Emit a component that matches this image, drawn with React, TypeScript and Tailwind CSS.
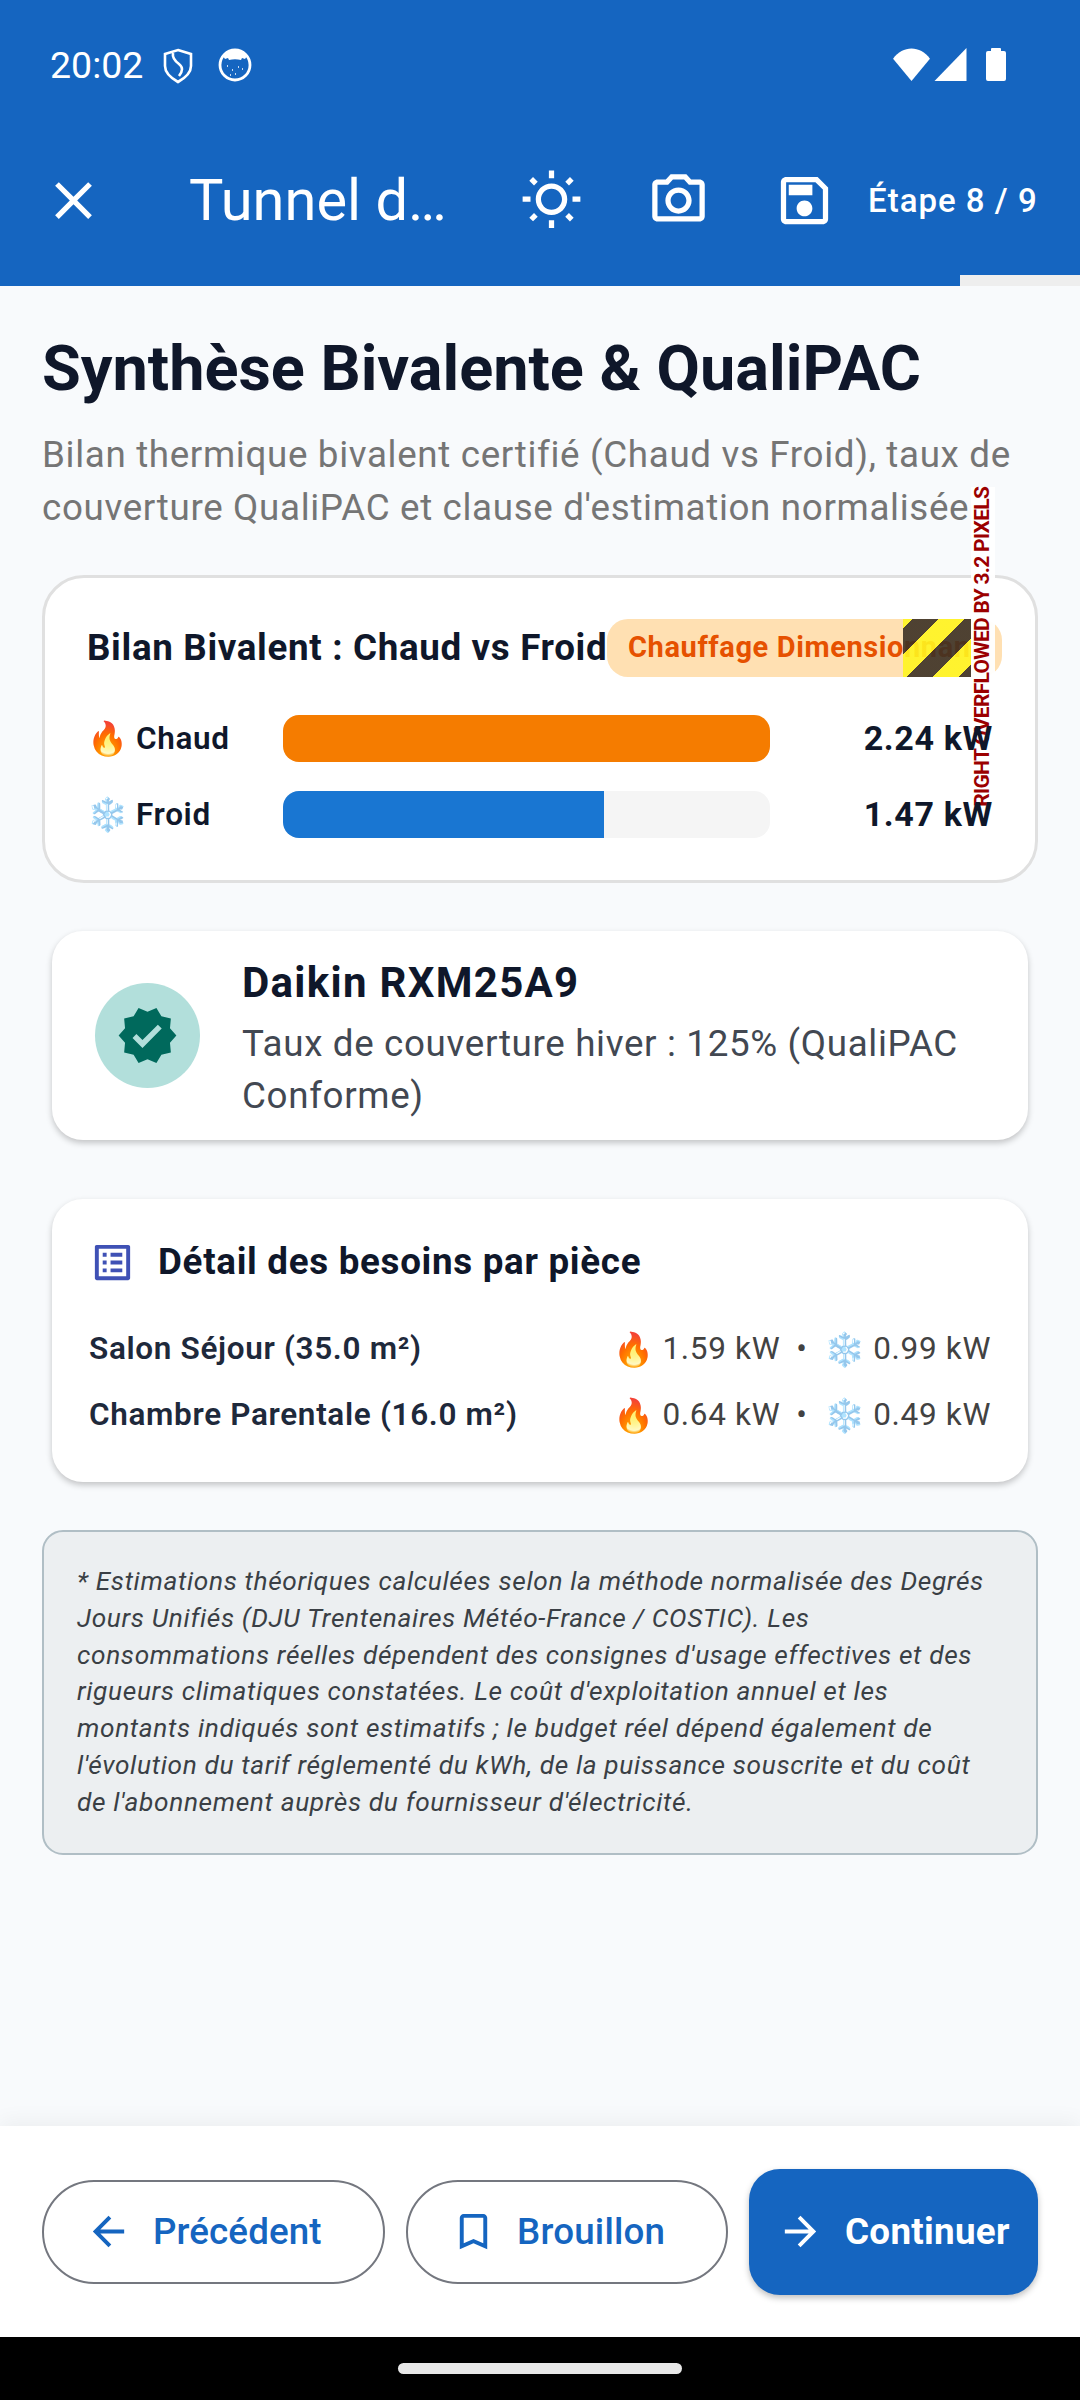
import React from 'react';

const Icon = ({ d, className }: { d: string; className: string }) => (
  <svg viewBox="0 0 24 24" fill="currentColor" className={className}>
    <path d={d} />
  </svg>
);

const icons = {
  close: 'M19 6.41L17.59 5 12 10.59 6.41 5 5 6.41 10.59 12 5 17.59 6.41 19 12 13.41 17.59 19 19 17.59 13.41 12z',
  sun: 'M6.76 4.84l-1.8-1.79-1.41 1.41 1.79 1.79zM1 10.5h3v2H1zM11 .55h2V3.5h-2zm8.04 2.495l1.408 1.407-1.79 1.79-1.407-1.408zm-1.8 15.115l1.79 1.8 1.41-1.41-1.8-1.79zM20 10.5h3v2h-3zm-8-5c-3.31 0-6 2.69-6 6s2.69 6 6 6 6-2.69 6-6-2.69-6-6-6zm0 10c-2.21 0-4-1.79-4-4s1.79-4 4-4 4 1.79 4 4-1.79 4-4 4zm-1 4h2v2.95h-2zm-7.45-.96l1.41 1.41 1.79-1.8-1.41-1.41z',
  camera: 'M14.12 4l1.83 2H20v12H4V6h4.05l1.83-2h4.24M15 2H9L7.17 4H4c-1.1 0-2 .9-2 2v12c0 1.1.9 2 2 2h16c1.1 0 2-.9 2-2V6c0-1.1-.9-2-2-2h-3.17L15 2zm-3 7c1.65 0 3 1.35 3 3s-1.35 3-3 3-3-1.35-3-3 1.35-3 3-3m0-2c-2.76 0-5 2.24-5 5s2.24 5 5 5 5-2.24 5-5-2.24-5-5-5z',
  save: 'M17 3H5c-1.11 0-2 .9-2 2v14c0 1.1.89 2 2 2h14c1.1 0 2-.9 2-2V7l-4-4zm2 16H5V5h11.17L19 7.83V19zm-7-7c-1.66 0-3 1.34-3 3s1.34 3 3 3 3-1.34 3-3-1.34-3-3-3zM6 6h9v4H6z',
  verified: 'M23 12l-2.44-2.79.34-3.69-3.61-.82-1.89-3.2L12 2.96 8.6 1.5 6.71 4.69 3.1 5.5l.34 3.7L1 12l2.44 2.79-.34 3.7 3.61.82L8.6 22.5l3.4-1.47 3.4 1.46 1.89-3.19 3.61-.82-.34-3.69L23 12zm-12.91 4.72l-3.8-3.81 1.48-1.48 2.32 2.33 5.85-5.87 1.48 1.48-7.33 7.35z',
  list: 'M19 5v14H5V5h14m1.1-2H3.9c-.5 0-.9.4-.9.9v16.2c0 .4.4.9.9.9h16.2c.4 0 .9-.5.9-.9V3.9c0-.5-.5-.9-.9-.9zM11 7h6v2h-6V7zm0 4h6v2h-6v-2zm0 4h6v2h-6v-2zM7 7h2v2H7V7zm0 4h2v2H7v-2zm0 4h2v2H7v-2z',
  back: 'M20 11H7.83l5.59-5.59L12 4l-8 8 8 8 1.41-1.41L7.83 13H20v-2z',
  forward: 'M12 4l-1.41 1.41L16.17 11H4v2h12.17l-5.58 5.59L12 20l8-8z',
  bookmark: 'M17 3H7c-1.1 0-2 .9-2 2v16l7-3 7 3V5c0-1.1-.9-2-2-2zm0 15l-5-2.18L7 18V5h10v13z',
};

const Rooms = [
  { name: 'Salon Séjour (35.0 m²)', hot: '1.59 kW', cold: '0.99 kW' },
  { name: 'Chambre Parentale (16.0 m²)', hot: '0.64 kW', cold: '0.49 kW' },
];

const Meter = ({ emoji, label, value, bar, width }: { emoji: string; label: string; value: string; bar: string; width: string }) => (
  <div className="flex items-center h-[47px]">
    <span className="w-[49px] text-[33px] leading-none">{emoji}</span>
    <span className="w-[147px] text-[31.5px] font-semibold text-[#0f172a] tracking-[0.66px]">{label}</span>
    <div className="w-[487px] h-[47px] rounded-[16px] bg-[#f5f5f5] overflow-hidden">
      <div className={`h-full ${bar} ${width}`} />
    </div>
    <span className="ml-auto text-[34px] font-bold text-[#0f172a] tracking-[0.66px]">{value}</span>
  </div>
);

const App = () => {
  return (
    <div className="w-[1080px] h-[2400px] flex flex-col bg-[#f8fafc] font-['Roboto',sans-serif] overflow-hidden">
      <header className="relative h-[286px] shrink-0 bg-[#1565c0] text-white">
        <div className="h-[130px] flex items-start pt-[43px] pl-[50px] pr-[74px]">
          <span className="text-[37.5px] leading-[44px]">20:02</span>
          <svg viewBox="0 0 30 36" fill="none" stroke="currentColor" strokeWidth="2.6" className="w-[30px] h-[36px] ml-[20px] mt-[5px]">
            <path d="M15 2l13 4v12c0 7-6 12-13 16C8 30 2 25 2 18V6z" />
            <path d="M10 5c-1 5 2 8 6 11s4 7 0 12" />
          </svg>
          <svg viewBox="0 0 34 34" className="w-[34px] h-[34px] ml-[25px] mt-[5px]">
            <circle cx="17" cy="17" r="15" fill="none" stroke="currentColor" strokeWidth="2.8" />
            <path d="M5 8C9 1 25 1 29 8l-2 3-3-1-1 2c-4-1-8-1-12 0l-1-2-3 1z" fill="currentColor" />
            <path d="M9 18h1M14 22h1M20 19h1M24 21h1M17 26h1M12 27h1" stroke="currentColor" strokeWidth="1.6" />
          </svg>
          <div className="ml-auto flex items-center gap-[3px] pt-[4px]">
            <svg viewBox="0 0 38 34" className="w-[39px] h-[33px] fill-white">
              <path d="M0 11C10 -3 28 -3 38 11L19 34z" />
            </svg>
            <svg viewBox="0 0 32 33" className="w-[33px] h-[33px] fill-white">
              <path d="M32 0v33H0z" />
            </svg>
            <svg viewBox="0 0 20 34" className="w-[20px] h-[34px] ml-[16px] fill-white">
              <path d="M5 2a1 1 0 011-1h8a1 1 0 011 1v2h3a2 2 0 012 2v26a2 2 0 01-2 2H2a2 2 0 01-2-2V6a2 2 0 012-2h3z" />
            </svg>
          </div>
        </div>
        <div className="h-[141px] flex items-center">
          <Icon d={icons.close} className="w-[63px] h-[63px] ml-[42px] shrink-0" />
          <span className="ml-[84px] w-[333px] text-[57.75px] leading-none whitespace-nowrap">Tunnel d…</span>
          <Icon d={icons.sun} className="w-[63px] h-[63px] ml-[-2px]" />
          <Icon d={icons.camera} className="w-[63px] h-[63px] ml-[64px]" />
          <Icon d={icons.save} className="w-[63px] h-[63px] ml-[63px]" />
          <span className="ml-[32px] text-[33px] font-medium whitespace-nowrap tracking-[1px]">Étape 8 / 9</span>
        </div>
        <div className="absolute right-0 bottom-0 w-[120px] h-[11px] bg-[#eeeeee]" />
      </header>

      <main className="flex-1 flex flex-col px-[42px] pt-[42px]">
        <h1 className="text-[63px] leading-[82px] font-bold text-[#0f172a] whitespace-nowrap">Synthèse Bivalente & QualiPAC</h1>
        <p className="mt-[19px] text-[36.75px] leading-[52.5px] text-[#757575] tracking-[0.66px]">
          Bilan thermique bivalent certifié (Chaud vs Froid), taux de couverture QualiPAC et clause d'estimation normalisée
        </p>

        <section className="relative mt-[41px] h-[308px] rounded-[42px] border-[3px] border-[#e0e0e0] bg-white px-[42px] pt-[41px]">
          <div className="flex items-center h-[58px]">
            <h2 className="w-[520px] shrink-0 text-[36.75px] font-bold text-[#0f172a] whitespace-nowrap tracking-[0.66px]">Bilan Bivalent : Chaud vs Froid</h2>
            <div className="w-[395px] h-[58px] shrink-0 rounded-[21px] bg-[#ffe0b2] px-[21px] flex items-center overflow-hidden">
              <span className="text-[29px] font-bold text-[#e65100] whitespace-nowrap tracking-[0.6px]">Chauffage Dimensionnant</span>
            </div>
          </div>
          <div className="absolute left-[858px] top-[41px] w-[68px] h-[58px] bg-[repeating-linear-gradient(135deg,#fff520_0px,#fff520_7px,#3b3024_7px,#3b3024_25.4px,#fff520_25.4px,#fff520_36.8px)] opacity-90" />
          <div className="absolute left-[926px] top-[-91px] w-[24px] h-[320px] flex items-center justify-center bg-white/95">
            <span className="block rotate-[-90deg] whitespace-nowrap text-[21px] font-bold text-[#9b0000] tracking-[-0.7px]">RIGHT OVERFLOWED BY 3.2 PIXELS</span>
          </div>
          <div className="relative mt-[38px] flex flex-col gap-[29px]">
            <Meter emoji="🔥" label="Chaud" value="2.24 kW" bar="bg-[#f57c00]" width="w-full" />
            <Meter emoji="❄️" label="Froid" value="1.47 kW" bar="bg-[#1976d2]" width="w-[66%]" />
          </div>
        </section>

        <section className="mx-[10px] mt-[48px] h-[209px] rounded-[31px] bg-white shadow-[0_3px_6px_rgba(0,0,0,0.22)] flex items-center pl-[43px] pr-[30px]">
          <div className="w-[105px] h-[105px] rounded-full bg-[#b2dfdb] shrink-0 flex items-center justify-center">
            <Icon d={icons.verified} className="w-[63px] h-[63px] text-[#00695c]" />
          </div>
          <div className="ml-[42px] pt-[9px]">
            <h3 className="text-[42px] leading-[50px] font-bold text-[#0f172a] tracking-[1.3px]">Daikin RXM25A9</h3>
            <p className="mt-[10px] text-[36.75px] leading-[52.5px] text-[#424852] tracking-[0.66px]">
              Taux de couverture hiver : 125% (QualiPAC Conforme)
            </p>
          </div>
        </section>

        <section className="mx-[10px] mt-[59px] h-[283px] rounded-[31px] bg-white shadow-[0_3px_6px_rgba(0,0,0,0.22)] pl-[37px] pr-[37px] pt-[42px]">
          <div className="flex items-center h-[42px]">
            <Icon d={icons.list} className="w-[47px] h-[47px] shrink-0 text-[#3f51b5]" />
            <h3 className="ml-[22px] text-[36.75px] font-bold text-[#0f172a] tracking-[0.7px]">Détail des besoins par pièce</h3>
          </div>
          <div className="mt-[49px] flex flex-col gap-[32px]">
            {Rooms.map((room) => (
              <div key={room.name} className="flex items-center h-[34px]">
                <span className="text-[31.5px] font-semibold text-[#1e293b] tracking-[0.66px]">{room.name}</span>
                <div className="ml-auto flex items-center text-[31.5px] text-[#424242] tracking-[0.66px]">
                  <span className="text-[33px] leading-none">🔥</span>
                  <span className="ml-[8px]">{room.hot}</span>
                  <span className="mx-[16px]">•</span>
                  <span className="text-[33px] leading-none">❄️</span>
                  <span className="ml-[8px]">{room.cold}</span>
                </div>
              </div>
            ))}
          </div>
        </section>

        <section className="mt-[48px] h-[325px] rounded-[21px] border-[2.6px] border-[#b0bec5] bg-[#eceff1] px-[33px] pt-[31px]">
          <p className="text-[26.25px] leading-[36.75px] italic text-[#3a3f45] tracking-[0.65px]">
            * Estimations théoriques calculées selon la méthode normalisée des Degrés Jours Unifiés (DJU Trentenaires Météo-France / COSTIC). Les consommations réelles dépendent des consignes d'usage effectives et des rigueurs climatiques constatées. Le coût d'exploitation annuel et les montants indiqués sont estimatifs ; le budget réel dépend également de l'évolution du tarif réglementé du kWh, de la puissance souscrite et du coût de l'abonnement auprès du fournisseur d'électricité.
          </p>
        </section>
      </main>

      <footer className="h-[211px] shrink-0 bg-white shadow-[0_-5px_20px_rgba(0,0,0,0.05)] flex items-center pl-[42px] pr-[42px]">
        <button className="w-[343px] h-[104px] rounded-[52px] border-[2.6px] border-[#74777f] flex items-center pl-[41px] gap-[21px] text-[36.75px] font-medium text-[#1565c0] tracking-[0.1px]">
          <Icon d={icons.back} className="w-[47px] h-[47px]" />
          Précédent
        </button>
        <button className="ml-[21px] w-[322px] h-[104px] rounded-[52px] border-[2.6px] border-[#74777f] flex items-center pl-[42px] gap-[20px] text-[36.75px] font-medium text-[#1565c0] tracking-[0.2px]">
          <Icon d={icons.bookmark} className="w-[47px] h-[47px]" />
          Brouillon
        </button>
        <button className="ml-[21px] w-[289px] h-[126px] rounded-[31px] bg-[#1565c0] shadow-[0_3px_6px_rgba(0,0,0,0.25)] flex items-center pl-[28px] gap-[21px] text-[36.75px] font-bold text-white tracking-[0.3px]">
          <Icon d={icons.forward} className="w-[47px] h-[47px]" />
          Continuer
        </button>
      </footer>

      <div className="h-[63px] shrink-0 bg-black flex items-center justify-center">
        <div className="w-[284px] h-[11px] rounded-full bg-[#e8e8e8]" />
      </div>
    </div>
  );
};

export default App;
